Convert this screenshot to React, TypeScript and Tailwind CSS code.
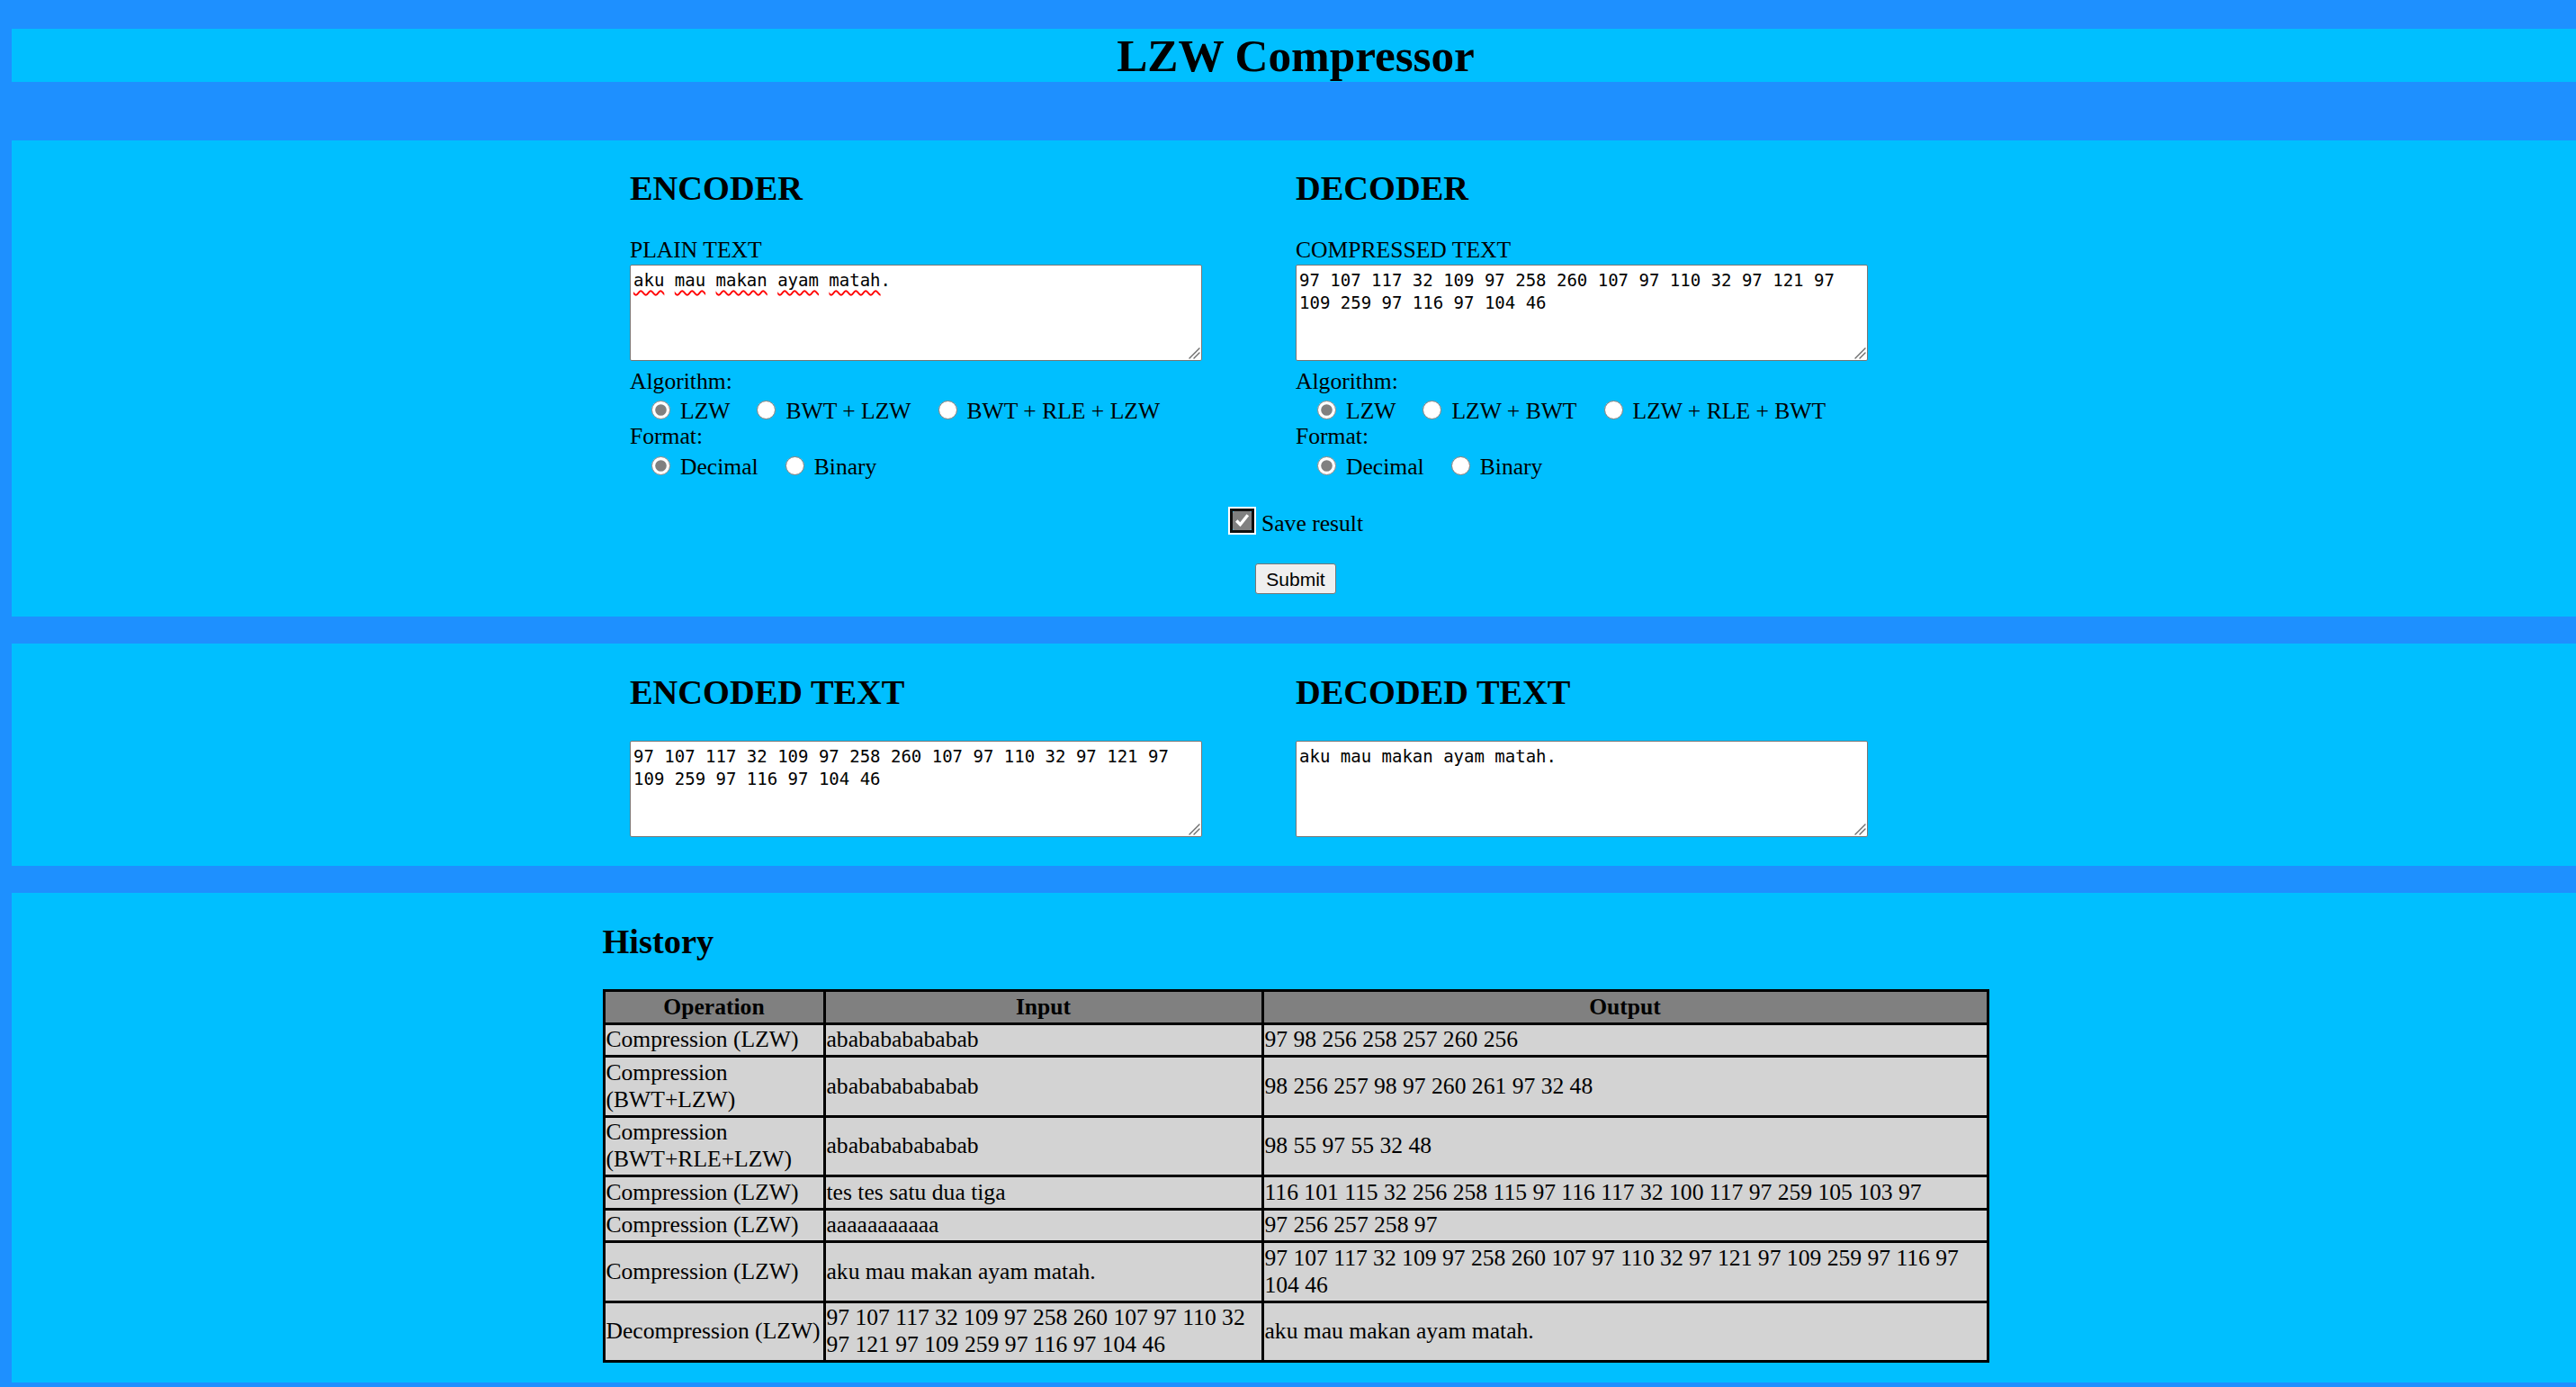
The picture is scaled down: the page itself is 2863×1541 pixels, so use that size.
import { Fragment } from 'react';

type RadioOpt = { label: string; checked?: boolean };

const encoded =
  '97 107 117 32 109 97 258 260 107 97 110 32 97 121 97 109 259 97 116 97 104 46';
const plain = 'aku mau makan ayam matah.';

const history: { op: string[]; input: string; output: string }[] = [
  { op: ['Compression (LZW)'], input: 'ababababababab', output: '97 98 256 258 257 260 256' },
  { op: ['Compression', '(BWT+LZW)'], input: 'ababababababab', output: '98 256 257 98 97 260 261 97 32 48' },
  { op: ['Compression', '(BWT+RLE+LZW)'], input: 'ababababababab', output: '98 55 97 55 32 48' },
  {
    op: ['Compression (LZW)'],
    input: 'tes tes satu dua tiga',
    output: '116 101 115 32 256 258 115 97 116 117 32 100 117 97 259 105 103 97',
  },
  { op: ['Compression (LZW)'], input: 'aaaaaaaaaaa', output: '97 256 257 258 97' },
  { op: ['Compression (LZW)'], input: plain, output: encoded },
  { op: ['Decompression (LZW)'], input: encoded, output: plain },
];

function RadioRow({ name, options, lower }: { name: string; options: RadioOpt[]; lower?: boolean }) {
  return (
    <div
      className={
        lower
          ? 'mt-[5px] flex h-[29px] items-center pl-[24px] leading-[29px]'
          : 'mt-[4px] flex h-[29px] items-center pl-[24px] leading-[29px]'
      }
    >
      {options.map((o, i) => (
        <label key={o.label} className={i > 0 ? 'ml-[30px] flex items-center' : 'flex items-center'}>
          <input
            type="radio"
            name={name}
            defaultChecked={o.checked}
            className="m-0 mb-[3px] h-[21px] w-[21px] accent-[#808080]"
          />
          <span className="ml-[11px] whitespace-nowrap">{o.label}</span>
        </label>
      ))}
    </div>
  );
}

function TextBox({ value, squiggle }: { value: string; squiggle?: boolean }) {
  const box =
    "rounded-[2px] border px-[3px] pt-[4px] pb-[3px] font-['DejaVu_Sans_Mono',monospace] text-[19px] leading-[25px]";
  return (
    <div className="relative h-[107px] w-[636px]">
      <textarea
        readOnly
        spellCheck={false}
        value={value}
        className={`${box} block h-full w-full resize-none border-[#767676] bg-white text-black outline-none`}
      />
      {squiggle && (
        <div className={`${box} pointer-events-none absolute inset-0 border-transparent text-transparent`}>
          {value.split(' ').map((w, i) => {
            const word = w.replace('.', '');
            const rest = w.slice(word.length);
            return (
              <Fragment key={i}>
                {i > 0 && ' '}
                <span className="underline decoration-[#ff0000] decoration-wavy decoration-[1.5px] underline-offset-[4px]">
                  {word}
                </span>
                {rest}
              </Fragment>
            );
          })}
        </div>
      )}
      {/* resize grip */}
      <svg
        className="pointer-events-none absolute right-[2px] bottom-[2px] h-[14px] w-[14px]"
        viewBox="0 0 14 14"
      >
        <path d="M13 2 L2 13 M13 7 L7 13" stroke="#6b6b6b" strokeWidth="1.4" strokeLinecap="round" />
      </svg>
    </div>
  );
}

function CoderColumn({
  title,
  label,
  value,
  name,
  algos,
  squiggle,
}: {
  title: string;
  label: string;
  value: string;
  name: string;
  algos: string[];
  squiggle?: boolean;
}) {
  return (
    <div>
      <h2 className="text-[38.4px] leading-[44px] font-bold">{title}</h2>
      <div className="mt-[32px] leading-[29px]">{label}</div>
      <div className="mt-[2px]">
        <TextBox value={value} squiggle={squiggle} />
      </div>
      <div className="mt-[8px] leading-[29px]">Algorithm:</div>
      <RadioRow
        name={`${name}-algo`}
        options={algos.map((a, i) => ({ label: a, checked: i === 0 }))}
      />
      <div className="-mt-[1px] leading-[29px]">Format:</div>
      <RadioRow
        name={`${name}-format`}
        options={[{ label: 'Decimal', checked: true }, { label: 'Binary' }]}
        lower
      />
    </div>
  );
}

export default function App() {
  return (
    <div className="min-h-screen w-full overflow-hidden bg-[#1e90ff] pt-[32px] pb-[5px] font-['Liberation_Serif','Times_New_Roman',serif] text-[25.6px] text-black">
      <header className="ml-[13px] w-[2854px] bg-[#00bfff]">
        <h1 className="text-center text-[51.2px] leading-[59px] font-bold">LZW Compressor</h1>
      </header>

      <section className="mt-[65px] ml-[13px] w-[2854px] bg-[#00bfff] pt-[31px] pb-[25px]">
        <div className="mx-auto grid w-[1480px] grid-cols-2">
          <CoderColumn
            title="ENCODER"
            label="PLAIN TEXT"
            value={plain}
            name="enc"
            algos={['LZW', 'BWT + LZW', 'BWT + RLE + LZW']}
            squiggle
          />
          <CoderColumn
            title="DECODER"
            label="COMPRESSED TEXT"
            value={encoded}
            name="dec"
            algos={['LZW', 'LZW + BWT', 'LZW + RLE + BWT']}
          />
        </div>
        <label className="mt-[34px] flex h-[29px] items-center justify-center leading-[29px]">
          <input
            type="checkbox"
            defaultChecked
            className="m-0 mb-[6px] ml-[5px] h-[21px] w-[21px] rounded-[3px] accent-[#808080] shadow-[0_0_0_3px_#101010,0_0_0_5px_#ffffff]"
          />
          <span className="ml-[11px]">Save result</span>
        </label>
        <button className="mx-auto mt-[30px] block h-[34px] w-[90px] rounded-[3px] border border-[#767676] bg-[#efefef] font-['Liberation_Sans',Arial,sans-serif] text-[21px] leading-none text-black">
          Submit
        </button>
      </section>

      <section className="mt-[30px] ml-[13px] w-[2854px] bg-[#00bfff] pt-[32px] pb-[32px]">
        <div className="mx-auto grid w-[1480px] grid-cols-2">
          <div>
            <h2 className="text-[38.4px] leading-[44px] font-bold">ENCODED TEXT</h2>
            <div className="mt-[32px]">
              <TextBox value={encoded} />
            </div>
          </div>
          <div>
            <h2 className="text-[38.4px] leading-[44px] font-bold">DECODED TEXT</h2>
            <div className="mt-[32px]">
              <TextBox value={plain} />
            </div>
          </div>
        </div>
      </section>

      <section className="mt-[30px] ml-[13px] w-[2854px] bg-[#00bfff] pt-[32px] pb-[22px]">
        <div className="mx-auto w-[1541px]">
          <h2 className="text-[38.4px] leading-[44px] font-bold">History</h2>
          <table className="mt-[31px] w-[1541px] table-fixed border-collapse border-[3px] border-black leading-[30px]">
            <colgroup>
              <col className="w-[245px]" />
              <col className="w-[487px]" />
              <col />
            </colgroup>
            <thead>
              <tr className="bg-[#808080]">
                <th className="border-[3px] border-black px-[1px] py-[1.75px] text-center font-bold">Operation</th>
                <th className="border-[3px] border-black px-[1px] py-[1.75px] text-center font-bold">Input</th>
                <th className="border-[3px] border-black px-[1px] py-[1.75px] text-center font-bold">Output</th>
              </tr>
            </thead>
            <tbody>
              {history.map((row, i) => (
                <tr key={i} className="bg-[#d3d3d3]">
                  <td className="border-[3px] border-black px-[1px] py-[1.75px] align-middle whitespace-nowrap">
                    {row.op.map((line, j) => (
                      <div key={j}>{line}</div>
                    ))}
                  </td>
                  <td className="border-[3px] border-black px-[1px] py-[1.75px] align-middle">{row.input}</td>
                  <td className="border-[3px] border-black px-[1px] py-[1.75px] align-middle">{row.output}</td>
                </tr>
              ))}
            </tbody>
          </table>
        </div>
      </section>
    </div>
  );
}
